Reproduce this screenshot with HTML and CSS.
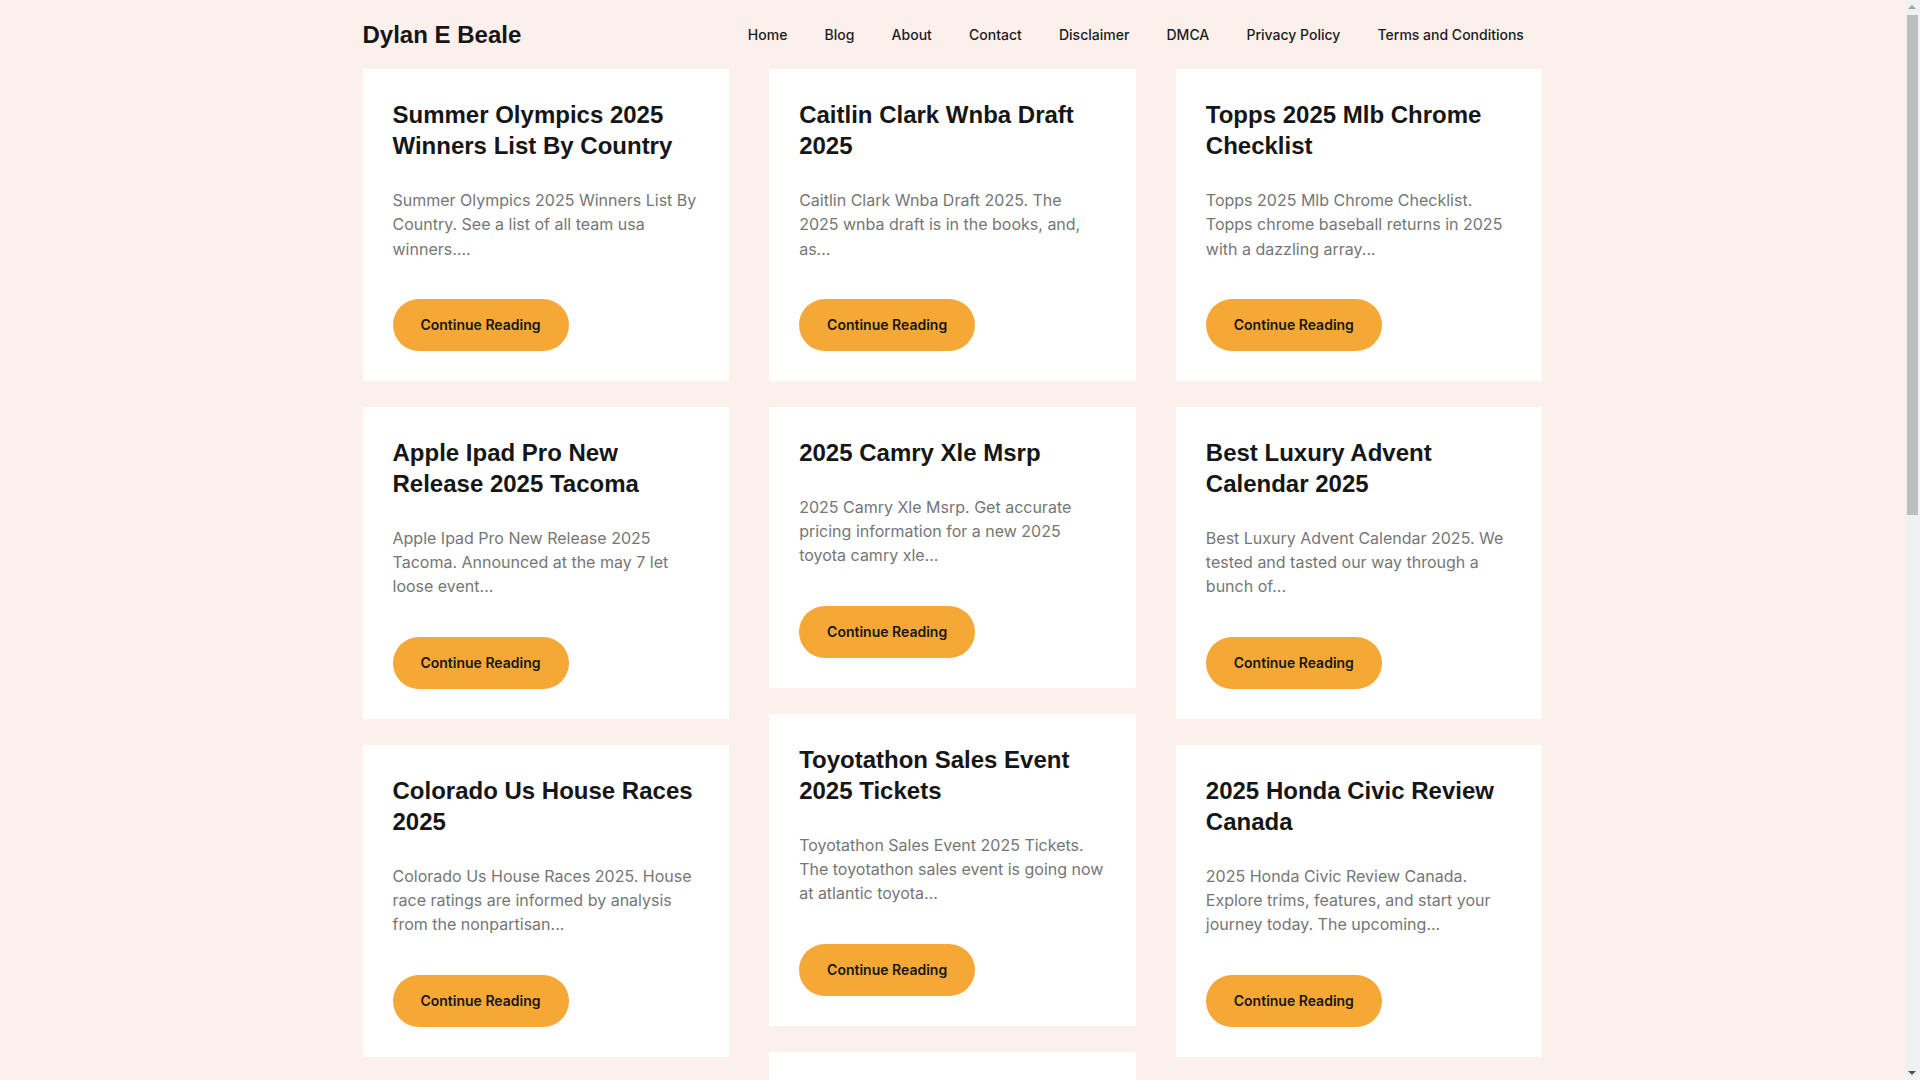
FILE: index.html
```html
<!DOCTYPE html>
<html lang="en">
<head>
<meta charset="utf-8">
<title>Dylan E Beale</title>
<link rel="stylesheet" href="styles.css">
</head>
<body>
<header class="site-header">
  <div class="container header-inner">
    <a class="logo" href="#">Dylan E Beale</a>
    <nav class="main-nav">
      <a href="#">Home</a>
      <a href="#">Blog</a>
      <a href="#">About</a>
      <a href="#">Contact</a>
      <a href="#">Disclaimer</a>
      <a href="#">DMCA</a>
      <a href="#">Privacy Policy</a>
      <a href="#">Terms and Conditions</a>
    </nav>
  </div>
</header>
<main class="container posts">
  <div class="col">
    <article class="card">
      <h2 class="title">Summer Olympics 2025 Winners List By Country</h2>
      <p class="excerpt">Summer Olympics 2025 Winners List By Country. See a list of all team usa winners....</p>
      <a class="btn" href="#">Continue Reading</a>
    </article>
    <article class="card">
      <h2 class="title">Apple Ipad Pro New Release 2025 Tacoma</h2>
      <p class="excerpt">Apple Ipad Pro New Release 2025 Tacoma. Announced at the may 7 let loose event...</p>
      <a class="btn" href="#">Continue Reading</a>
    </article>
    <article class="card">
      <h2 class="title">Colorado Us House Races 2025</h2>
      <p class="excerpt">Colorado Us House Races 2025. House race ratings are informed by analysis from the nonpartisan...</p>
      <a class="btn" href="#">Continue Reading</a>
    </article>
    <article class="card">
      <h2 class="title">Nfl Draft 2025 Mock Draft Simulator</h2>
      <p class="excerpt">Nfl Draft 2025 Mock Draft Simulator. Make picks for your favorite team and see...</p>
      <a class="btn" href="#">Continue Reading</a>
    </article>
  </div>
  <div class="col">
    <article class="card">
      <h2 class="title">Caitlin Clark Wnba Draft 2025</h2>
      <p class="excerpt">Caitlin Clark Wnba Draft 2025. The 2025 wnba draft is in the books, and, as...</p>
      <a class="btn" href="#">Continue Reading</a>
    </article>
    <article class="card">
      <h2 class="title">2025 Camry Xle Msrp</h2>
      <p class="excerpt">2025 Camry Xle Msrp. Get accurate pricing information for a new 2025 toyota camry xle...</p>
      <a class="btn" href="#">Continue Reading</a>
    </article>
    <article class="card">
      <h2 class="title">Toyotathon Sales Event 2025 Tickets</h2>
      <p class="excerpt">Toyotathon Sales Event 2025 Tickets. The toyotathon sales event is going now at atlantic toyota...</p>
      <a class="btn" href="#">Continue Reading</a>
    </article>
    <article class="card">
      <h2 class="title">Best Family Suv 2025 Uk</h2>
      <p class="excerpt">Best Family Suv 2025 Uk. Our experts have driven and rated the latest models to...</p>
      <a class="btn" href="#">Continue Reading</a>
    </article>
  </div>
  <div class="col">
    <article class="card">
      <h2 class="title">Topps 2025 Mlb Chrome Checklist</h2>
      <p class="excerpt">Topps 2025 Mlb Chrome Checklist. Topps chrome baseball returns in 2025 with a dazzling array...</p>
      <a class="btn" href="#">Continue Reading</a>
    </article>
    <article class="card">
      <h2 class="title">Best Luxury Advent Calendar 2025</h2>
      <p class="excerpt">Best Luxury Advent Calendar 2025. We tested and tasted our way through a bunch of...</p>
      <a class="btn" href="#">Continue Reading</a>
    </article>
    <article class="card">
      <h2 class="title">2025 Honda Civic Review Canada</h2>
      <p class="excerpt">2025 Honda Civic Review Canada. Explore trims, features, and start your journey today. The upcoming...</p>
      <a class="btn" href="#">Continue Reading</a>
    </article>
    <article class="card">
      <h2 class="title">Kia Sorento 2025 Release Date</h2>
      <p class="excerpt">Kia Sorento 2025 Release Date. The refreshed midsize suv arrives with a new look and...</p>
      <a class="btn" href="#">Continue Reading</a>
    </article>
  </div>
</main>
<footer class="site-footer">
  <div class="container footer-inner">© 2025 Dylan E Beale</div>
</footer>
<div class="fake-scrollbar" aria-hidden="true">
  <span class="sb-arrow sb-up"></span>
  <span class="sb-thumb"></span>
  <span class="sb-arrow sb-down"></span>
</div>
</body>
</html>
```

FILE: styles.css
```css
html, body {
  margin: 0;
  padding: 0;
}
body {
  background: #fbf0eb;
  color: #1b1b1b;
  font-family: Inter, "Liberation Sans", sans-serif;
  padding-right: 15px;
}
a {
  text-decoration: none;
  color: inherit;
}
.container {
  width: 1180px;
  margin: 0 auto;
}
.site-header {
  height: 69px;
}
.header-inner {
  height: 69px;
  display: flex;
  align-items: center;
  justify-content: space-between;
}
.logo {
  font-family: "Liberation Sans", Arial, sans-serif;
  font-weight: 700;
  font-size: 24px;
  color: #161616;
  line-height: 1;
}
.main-nav {
  display: flex;
  align-items: center;
}
.main-nav a {
  font-family: Inter, sans-serif;
  font-weight: 500;
  font-size: 14px;
  line-height: 20px;
  padding: 0 18.6px;
  color: #1c1c1c;
}
.posts {
  display: grid;
  grid-template-columns: repeat(3, 1fr);
  column-gap: 40px;
  align-items: start;
}
.col {
  display: flex;
  flex-direction: column;
  gap: 26px;
}
.card {
  background: #ffffff;
  padding: 30px;
  display: flex;
  flex-direction: column;
  align-items: flex-start;
}
.title {
  margin: 0 0 27px;
  font-family: "Liberation Sans", Arial, sans-serif;
  font-weight: 700;
  font-size: 24px;
  line-height: 31px;
  color: #161616;
}
.excerpt {
  margin: 0 0 38px;
  padding-right: 2px;
  font-family: Inter, sans-serif;
  font-size: 16px;
  line-height: 24.3px;
  color: #767676;
}
.btn {
  display: inline-flex;
  align-items: center;
  justify-content: center;
  height: 52px;
  width: 176px;
  box-sizing: border-box;
  border-radius: 26px;
  background: #f5a836;
  color: #171717;
  font-family: Inter, sans-serif;
  font-weight: 600;
  font-size: 14px;
}
.site-footer {
  margin-top: 26px;
  padding: 30px 0;
}
.footer-inner {
  font-size: 15px;
  color: #555;
  text-align: center;
}
.fake-scrollbar {
  position: fixed;
  top: 0;
  right: 0;
  bottom: 0;
  width: 15px;
  background: #f1f1f1;
}
.sb-thumb {
  position: absolute;
  top: 15px;
  left: 2px;
  right: 2px;
  height: 500px;
  background: #bebebe;
}
.sb-arrow {
  position: absolute;
  left: 3px;
  width: 0;
  height: 0;
  border-left: 4.5px solid transparent;
  border-right: 4.5px solid transparent;
}
.sb-up {
  top: 5px;
  border-bottom: 4px solid #a3a3a3;
}
.sb-down {
  bottom: 5px;
  border-top: 4px solid #505050;
}
```
